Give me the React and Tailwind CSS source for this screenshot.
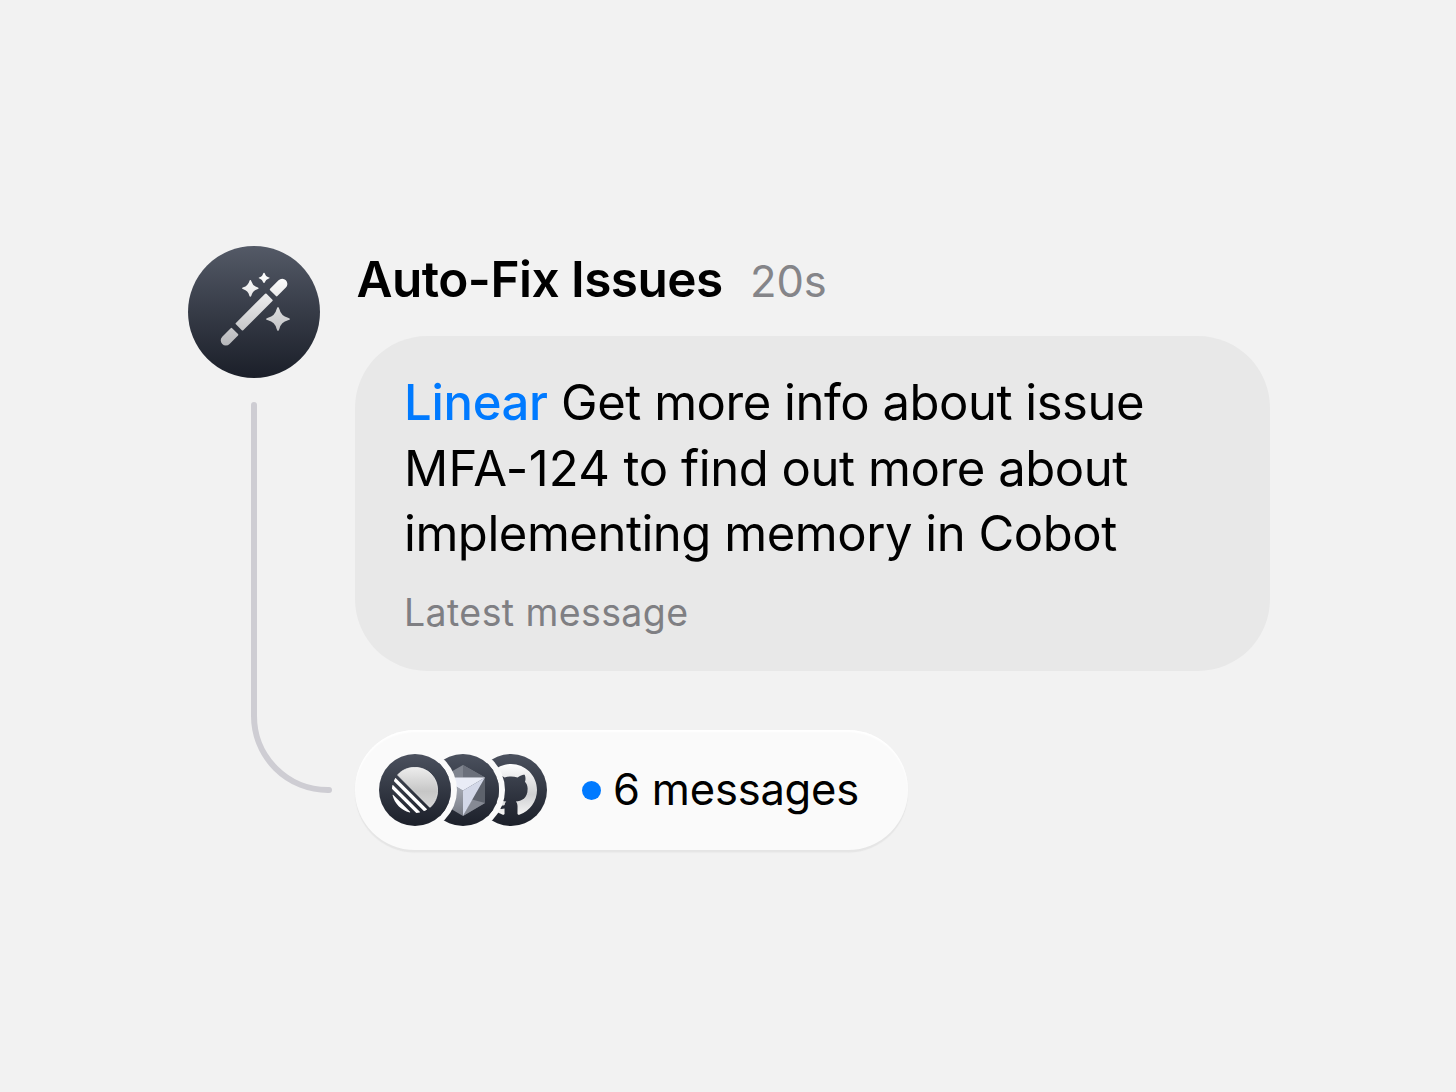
import React from "react";

const Wand = () => (
  <svg viewBox="24 24 396 396" className="h-[132px] w-[132px]">
    <defs>
      <linearGradient id="stars" x1="0" y1="105" x2="0" y2="322" gradientUnits="userSpaceOnUse">
        <stop stopColor="#ffffff" />
        <stop offset="1" stopColor="#b4b5b8" />
      </linearGradient>
      <linearGradient id="stick" x1="75" y1="-75" x2="-75" y2="75" gradientUnits="userSpaceOnUse">
        <stop stopColor="#ffffff" />
        <stop offset="1" stopColor="#b4b5b8" />
      </linearGradient>
    </defs>
    <g fill="url(#stick)" transform="translate(222.5 222) rotate(-45)">
      <rect x="-65" y="-15.5" width="130" height="31" rx="3" />
      <path d="M83 -15.5H119A15.5 15.5 0 0 1 119 15.5H83Q80 15.5 80 12.5V-12.5Q80 -15.5 83 -15.5Z" />
      <path d="M-84 -15.5H-120A15.5 15.5 0 0 0 -120 15.5H-84Q-81 15.5 -81 12.5V-12.5Q-81 -15.5 -84 -15.5Z" />
    </g>
    <g fill="url(#stars)">
      <path d="M211 126Q213 126 214 130Q218 144 232 148Q236 150 236 151Q236 153 232 154Q218 158 214 173Q213 176 211 176Q209 176 208 173Q204 158 190 154Q186 153 186 151Q186 150 190 148Q204 144 208 130Q209 126 211 126Z" />
      <path d="M252 104Q254 104 255 108Q257 116 265 118Q269 119 269 120Q269 121 265 122Q257 124 255 132Q254 135 252 135Q250 135 249 132Q247 124 240 122Q236 121 236 120Q236 119 240 118Q247 116 249 108Q250 104 252 104Z" />
      <path d="M294 207Q296 207 298 213Q303 234 324 239Q330 241 330 243Q330 245 324 247Q303 252 298 273Q296 279 294 279Q292 279 290 273Q285 252 264 247Q258 245 258 243Q258 241 264 239Q285 234 290 213Q292 207 294 207Z" />
    </g>
  </svg>
);

const LinearMark = () => (
  <svg viewBox="0 0 100 100" className="h-[46px] w-[46px]">
    <defs>
      <linearGradient id="linear" x1="0" y1="0" x2="0" y2="1">
        <stop stopColor="#ededed" />
        <stop offset="0.6" stopColor="#c6c6c6" />
        <stop offset="1" stopColor="#d6d6d6" />
      </linearGradient>
    </defs>
    <path
      fill="#ffffff"
      d="M1.225 61.523c-.222-.949.908-1.546 1.597-.857l36.512 36.512c.69.69.092 1.82-.857 1.597C20.052 94.452 5.548 79.949 1.225 61.523ZM.002 46.889c-.018.283.089.56.29.76L52.35 99.71c.2.2.477.307.76.29 2.37-.149 4.694-.46 6.963-.927.764-.157 1.03-1.096.478-1.648L2.576 39.448c-.552-.551-1.491-.286-1.648.479-.466 2.268-.778 4.593-.926 6.962ZM4.211 29.705c-.167.374-.082.811.207 1.1l64.777 64.777c.289.29.726.374 1.1.208 1.786-.796 3.517-1.693 5.185-2.684.552-.328.637-1.087.183-1.541L8.436 24.337c-.454-.454-1.213-.37-1.541.183-.991 1.668-1.888 3.4-2.684 5.185Z"
    />
    <path
      fill="url(#linear)"
      stroke="#f4f4f4"
      strokeWidth="1.5"
      d="M12.659 18.074c-.37-.37-.393-.964-.044-1.354C21.779 6.459 35.111 0.8 49.952 0.8 77.593 0.8 99.2 22.407 99.2 50.048c0 14.84-5.66 28.173-15.92 37.338-.39.348-.984.325-1.354-.045L12.659 18.074Z"
    />
  </svg>
);

const CursorMark = () => (
  <svg viewBox="0 0 44 51" className="h-[51px] w-[44px]">
    <defs>
      <linearGradient id="cursor" x1="0" y1="0" x2="0" y2="1">
        <stop stopColor="#b4b8c2" />
        <stop offset="1" stopColor="#777b85" />
      </linearGradient>
    </defs>
    <path d="M22 0 44 12.5 22 25.5 0 12.5Z" fill="#80858f" />
    <path d="M22 0 44 12.5H22Z" fill="#6b707b" />
    <path d="M0 12.5 22 25.5V51L0 38Z" fill="url(#cursor)" />
    <path d="M44 12.5V38L22 51Z" fill="#5d626c" />
    <path d="M44 38 22 51 31 34.5Z" fill="#868a94" />
    <path d="M0 12.5H44L22 25.5Z" fill="#e9ecf6" />
    <path d="M44 12.5 22 51V25.5Z" fill="#d3d8e8" />
  </svg>
);

const GithubMark = () => (
  <svg viewBox="0 0 16 16" className="h-[52px] w-[52px]">
    <defs>
      <linearGradient id="github" x1="0" y1="0" x2="0" y2="1">
        <stop stopColor="#ffffff" />
        <stop offset="0.6" stopColor="#cfd0d2" />
        <stop offset="1" stopColor="#f4f4f4" />
      </linearGradient>
    </defs>
    <path
      fill="url(#github)"
      d="M8 0C3.58 0 0 3.58 0 8c0 3.54 2.29 6.53 5.47 7.59.4.07.55-.17.55-.38 0-.19-.01-.82-.01-1.49-2.01.37-2.53-.49-2.69-.94-.09-.23-.48-.94-.82-1.13-.28-.15-.68-.52-.01-.53.63-.01 1.08.58 1.23.82.72 1.21 1.87.87 2.33.66.07-.52.28-.87.51-1.07-1.78-.2-3.64-.89-3.64-3.95 0-.87.31-1.59.82-2.15-.08-.2-.36-1.02.08-2.12 0 0 .67-.21 2.2.82.64-.18 1.32-.27 2-.27s1.36.09 2 .27c1.53-1.04 2.2-.82 2.2-.82.44 1.1.16 1.92.08 2.12.51.56.82 1.27.82 2.15 0 3.07-1.87 3.75-3.65 3.95.29.25.54.73.54 1.48 0 1.07-.01 1.93-.01 2.2 0 .21.15.46.55.38A8.01 8.01 0 0 0 16 8c0-4.42-3.58-8-8-8Z"
    />
  </svg>
);

const Badge = ({ children, className }) => (
  <div
    className={`flex h-[72px] w-[72px] shrink-0 items-center justify-center rounded-full bg-linear-to-b from-[#4b515e] to-[#1c202a] ${className}`}
  >
    {children}
  </div>
);

const App = () => {
  return (
    <div className="flex h-[1092px] w-full gap-[35px] bg-[#f2f2f2] pt-[246px] pl-[188px] font-['Inter',sans-serif] text-black">
      <div className="flex w-[132px] shrink-0 flex-col">
        <div className="h-[132px] w-[132px] rounded-full bg-linear-to-b from-[#545a67] to-[#1b1f29]">
          <Wand />
        </div>
        <svg viewBox="0 0 84 394" className="mt-6 ml-[63px] h-[394px] w-[84px] overflow-visible">
          <path
            d="M3 3V314A74 74 0 0 0 77 388H78"
            fill="none"
            stroke="#cecdd3"
            strokeWidth="6"
            strokeLinecap="round"
          />
        </svg>
      </div>

      <div className="flex flex-col items-start">
        <div className="flex h-[90px] items-baseline pt-[2px]">
          <h1 className="w-[395px] pl-[1.5px] text-[49.5px] leading-[62px] font-semibold tracking-[-0.52px] whitespace-nowrap">
            Auto-Fix Issues
          </h1>
          <span className="text-[43.5px] tracking-[-0.1px] text-[#858589]">20s</span>
        </div>

        <div className="h-[334.5px] w-[915px] rounded-[72px] bg-[#e8e8e8] px-[49px] pt-[34px]">
          <p className="text-[49px] leading-[65.7px] tracking-[-0.43px] whitespace-nowrap">
            <span className="block tracking-[-0.47px]">
              <span className="font-medium tracking-[-0.3px] text-[#007aff]">Linear</span> Get more info about issue
            </span>
            <span className="block">
              <span className="tracking-[0.3px]">MFA-124</span> to find out more about
            </span>
            <span className="block tracking-[-0.47px]">implementing memory in Cobot</span>
          </p>
          <p className="mt-[22px] text-[37.5px] leading-[48px] tracking-[0.4px] text-[#7f7f83]">Latest message</p>
        </div>

        <div className="mt-[59.5px] flex h-[120px] w-[553px] items-center rounded-full bg-[#fafafa] pl-6 shadow-[0_2.5px_1px_#e5e5e5,inset_0_2px_2px_#ffffff]">
          <div className="flex">
            <Badge className="z-20 ring-6 ring-[#fafafa]">
              <LinearMark />
            </Badge>
            <Badge className="z-10 -ml-6 ring-6 ring-[#fafafa]">
              <CursorMark />
            </Badge>
            <Badge className="-ml-6">
              <GithubMark />
            </Badge>
          </div>
          <span className="ml-[35px] h-[19px] w-[19px] rounded-full bg-[#007aff]" />
          <span className="-mt-[2px] ml-3 text-[43.5px] leading-[54px] tracking-[-0.2px] whitespace-nowrap">
            6 messages
          </span>
        </div>
      </div>
    </div>
  );
};

export default App;
